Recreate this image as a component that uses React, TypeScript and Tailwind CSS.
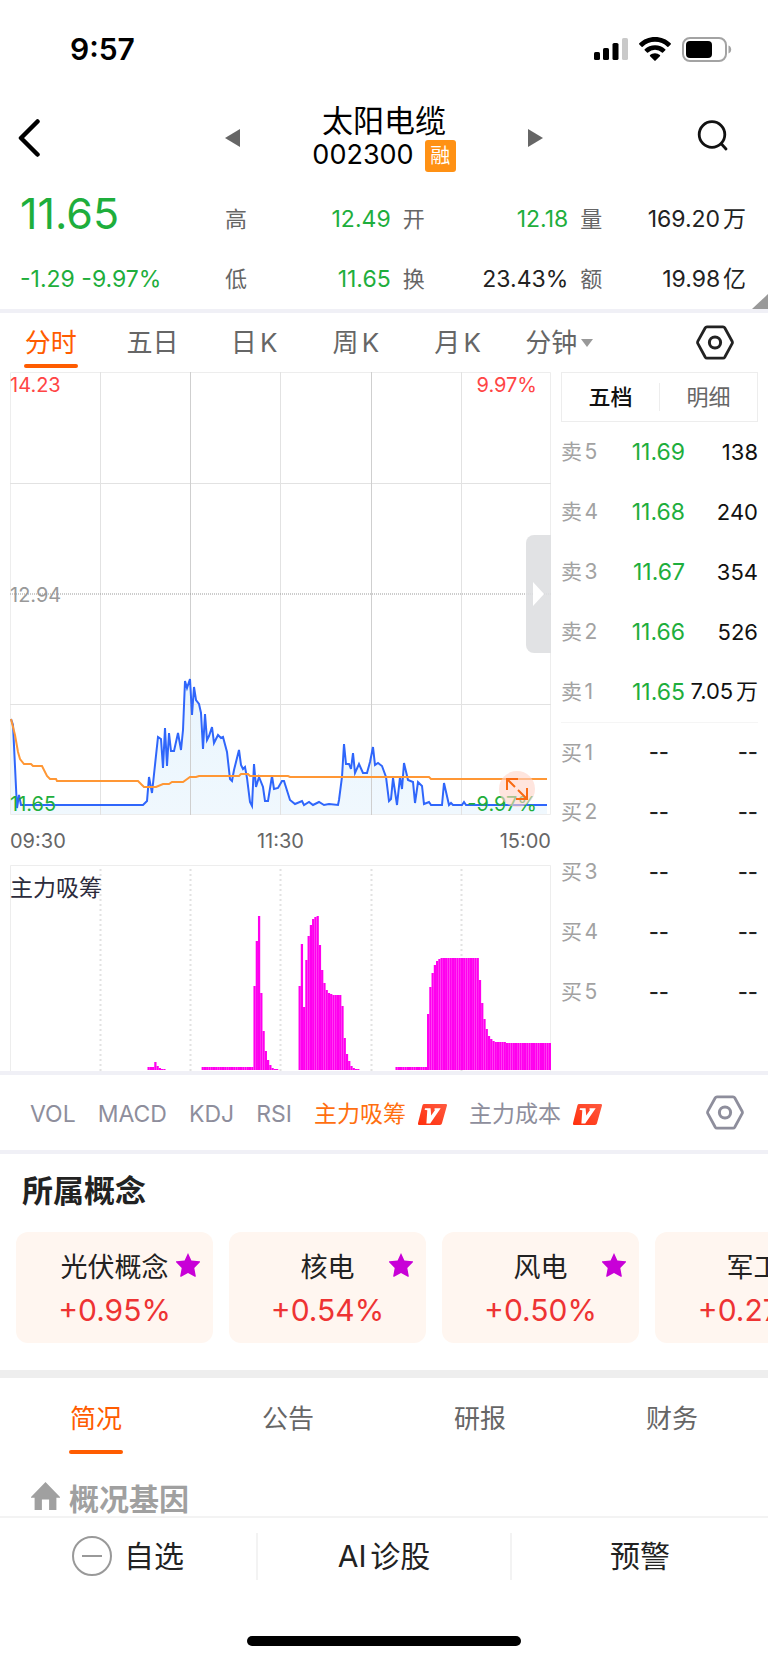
import { Fragment, useState, type ReactNode } from "react";

const periods = ["分时", "五日", "日K", "周K", "月K", "分钟"];

const quote = [
  [
    { label: "高", value: "12.49", down: true },
    { label: "开", value: "12.18", down: true },
    { label: "量", value: "169.20万", down: false },
  ],
  [
    { label: "低", value: "11.65", down: true },
    { label: "换", value: "23.43%", down: false },
    { label: "额", value: "19.98亿", down: false },
  ],
];

const asks = [
  ["卖5", "11.69", "138"],
  ["卖4", "11.68", "240"],
  ["卖3", "11.67", "354"],
  ["卖2", "11.66", "526"],
  ["卖1", "11.65", "7.05万"],
];

const bids = ["买1", "买2", "买3", "买4", "买5"];

const indicators = [
  { name: "VOL", vip: false },
  { name: "MACD", vip: false },
  { name: "KDJ", vip: false },
  { name: "RSI", vip: false },
  { name: "主力吸筹", vip: true },
  { name: "主力成本", vip: true },
];

const concepts = [
  { name: "光伏概念", change: "+0.95%" },
  { name: "核电", change: "+0.54%" },
  { name: "风电", change: "+0.50%" },
  { name: "军工", change: "+0.27%" },
];

const infoTabs = ["简况", "公告", "研报", "财务"];

const pricePoints =
  "1,347 3,353 7,436 9,423 11,433 133,433 137,429 139,405 142,421 148,365 151,367 153,396 155,356 157,394 159,361 161,379 164,379 168,361 171,378 173,358 175,309 177,316 180,307 182,343 184,315 186,328 189,332 191,341 193,377 195,342 197,368 199,364 202,355 204,371 208,363 211,366 213,365 217,380 220,407 222,409 224,398 229,378 231,393 233,397 235,395 237,406 240,430 242,434 244,392 246,415 249,405 253,415 255,429 258,429 262,404 264,417 268,416 272,409 274,409 280,428 285,432 292,429 294,433 299,430 303,433 309,430 314,433 319,432 328,433 329,428 332,405 334,372 336,392 339,392 341,397 343,381 345,401 349,392 353,401 357,401 360,390 363,375 365,393 368,391 372,394 376,405 379,429 381,427 383,406 387,433 390,405 392,417 394,391 398,408 403,410 405,431 408,410 412,414 414,432 419,430 421,433 432,433 434,411 439,433 441,431 443,433 452,433 454,430 456,433 537,433";

const averagePoints =
  "1,347 5,363 8,380 10,387 14,392 21,392 23,394 32,394 37,404 40,407 46,407 47,409 128,409 134,415 146,415 153,412 159,412 162,410 173,410 180,405 186,405 189,404 229,404 231,402 238,402 240,404 278,404 280,405 419,405 421,407 537,407";

// runs of one-minute bars: first minute, then the bar heights
const barRuns: [number, number[]][] = [
  [61, [3, 3, 3, 8, 4, 2, 1, 1]],
  [85, Array(23).fill(3)],
  [108, [84, 129, 154, 77, 39, 19, 10, 5, 2, 1, 1]],
  [128, [84, 126, 63, 110, 134, 145, 151, 153, 154, 125, 100, 87, 80, 77, 76, 75, 75, 75, 75, 64, 32, 16, 9, 4, 2, 1, 1]],
  [171, Array(14).fill(3)],
  [185, [56, 83, 97, 105, 109, 111, ...Array(17).fill(112), 90, 67, 51, 41, 34, 31, 29, 28, 28, 28, 28, 28, ...Array(20).fill(27)]],
];

const MINUTE = 541 / 240;

function HexIcon({ className }: { className: string }) {
  return (
    <svg viewBox="0 0 38 35" fill="none" stroke="currentColor" className={className} aria-hidden="true">
      <path d="M11 1.8h16a2 2 0 0 1 1.7 1l7.4 13.4a2.5 2.5 0 0 1 0 2.4l-7.4 13.6a2 2 0 0 1-1.7 1H11a2 2 0 0 1-1.7-1L1.9 18.6a2.5 2.5 0 0 1 0-2.4L9.3 2.8a2 2 0 0 1 1.7-1z" strokeWidth="2.8" />
      <circle cx="19" cy="17.5" r="5.6" strokeWidth="3" />
    </svg>
  );
}

function VipBadge() {
  return (
    <svg viewBox="0 0 29 21" className="h-[21px] w-[29px]" aria-hidden="true">
      <defs>
        <linearGradient id="vip" x1="0" y1="1" x2="1" y2="0">
          <stop offset="0" stopColor="#ff2f0c" />
          <stop offset="1" stopColor="#ff5a40" />
        </linearGradient>
      </defs>
      <path d="M6.2 0h21.3a1.4 1.4 0 0 1 1.4 1.8l-5 17.7a2 2 0 0 1-1.9 1.5H1.4A1.4 1.4 0 0 1 0 19.2L4.4 1.4A1.9 1.9 0 0 1 6.2 0z" fill="url(#vip)" />
      <path d="M7 4.200h5.600l.6 7.200 4-5.700-1-.3.5-1.200h6L12.200 19.400H8.400L9.300 6.200 6.600 5.800z" fill="#fff" />
    </svg>
  );
}

function Divider() {
  return <div className="h-1 bg-[#f0f0f6]" />;
}

function StatusBar() {
  return (
    <div className="flex h-[98px] items-center justify-between pl-[70px] pr-9">
      <span className="text-[30px] font-semibold text-black">9:57</span>
      <div className="flex items-center gap-[11px]">
        <svg viewBox="0 0 34 24" className="h-6 w-[34px]" aria-hidden="true">
          <rect x="0" y="15" width="6" height="8" rx="1.6" />
          <rect x="9" y="11" width="6" height="12" rx="1.6" />
          <rect x="18.500" y="6" width="6" height="17" rx="1.6" />
          <rect x="28" y="1" width="6" height="22" rx="1.6" fill="#c9c9c9" />
        </svg>
        <svg viewBox="0 0 32 24" className="h-6 w-8" aria-hidden="true">
          <path d="M16 0C9.800 0 4.200 2.400.3 6.300a.8.800 0 0 0 0 1.100l2.300 2.300a.8.800 0 0 0 1.100 0A17.700 17.700 0 0 1 16 4.800c4.800 0 9.100 1.900 12.300 4.900a.8.800 0 0 0 1.100 0l2.300-2.300a.8.800 0 0 0 0-1.100C27.800 2.400 22.200 0 16 0z" />
          <path d="M16 8.200c-4 0-7.600 1.500-10.300 4a.8.800 0 0 0 0 1.100L8 15.600a.8.800 0 0 0 1.100 0 10 10 0 0 1 13.800 0 .8.800 0 0 0 1.100 0l2.300-2.300a.8.800 0 0 0 0-1.100A15 15 0 0 0 16 8.200z" />
          <path d="M16 16.200c-1.900 0-3.600.7-4.900 1.900a.8.800 0 0 0 0 1.100l4.300 4.400a.8.800 0 0 0 1.200 0l4.300-4.400a.8.800 0 0 0 0-1.100 7.200 7.200 0 0 0-4.900-1.900z" />
        </svg>
        <svg viewBox="0 0 50 25" className="h-[25px] w-[50px]" aria-hidden="true">
          <rect x="1" y="1" width="43" height="23" rx="7" fill="none" stroke="#a3a3a3" strokeWidth="2" />
          <rect x="4" y="4" width="26" height="17" rx="4" />
          <path d="M46.500 8.500c1.700.6 2.700 2.200 2.700 4s-1 3.400-2.700 4z" fill="#a3a3a3" />
        </svg>
      </div>
    </div>
  );
}

function Header() {
  return (
    <header className="grid h-[91px] grid-cols-[1fr_auto_1fr] items-center pb-3 pl-[18px] pr-[18px]">
      <button type="button" aria-label="返回" className="justify-self-start">
        <svg viewBox="0 0 23 38" className="h-[38px] w-[23px]" fill="none" stroke="#000" strokeWidth="4.500" strokeLinecap="round" strokeLinejoin="round">
          <path d="M19.500 2.500 3 19l16.500 16.500" />
        </svg>
      </button>
      <div className="flex items-center gap-[72px]">
        <button type="button" aria-label="上一只">
          <svg viewBox="0 0 15 18" className="h-[18px] w-[15px]" fill="#666">
            <path d="M15 0v18L0 9z" />
          </svg>
        </button>
        <div className="text-center text-black">
          <h1 className="text-[31px] leading-9">太阳电缆</h1>
          <div className="flex h-[34px] items-center justify-center gap-[11px]">
            <span className="text-[27px]">002300</span>
            <span className="flex h-8 w-[31px] items-center justify-center rounded-[3px] bg-[#ff9114] text-[20px] text-white">融</span>
          </div>
        </div>
        <button type="button" aria-label="下一只">
          <svg viewBox="0 0 15 18" className="h-[18px] w-[15px]" fill="#666">
            <path d="M0 0v18l15-9z" />
          </svg>
        </button>
      </div>
      <button type="button" aria-label="搜索" className="mb-1 mr-[22px] justify-self-end">
        <svg viewBox="0 0 31 31" className="h-[31px] w-[31px]" fill="none" stroke="#111" strokeWidth="2.800" strokeLinecap="round">
          <circle cx="15" cy="14.500" r="12.800" />
          <path d="m24.500 24 4.500 5" />
        </svg>
      </button>
    </header>
  );
}

function QuoteCells({ row }: { row: (typeof quote)[number] }) {
  return row.map((cell) => (
    <dl key={cell.label} className="flex items-center justify-between">
      <dt className="text-[22px] text-[#666]">{cell.label}</dt>
      <dd className={`text-[23px] ${cell.down ? "text-[#1eae3c]" : "text-[#222]"}`}>{cell.value}</dd>
    </dl>
  ));
}

function Quote() {
  return (
    <section className="relative grid grid-cols-[193px_1fr_1fr_1fr] gap-x-3 pl-5 pr-[22px] text-[#1eae3c]">
      <div className="flex h-[60px] items-start text-[43px] leading-[48px]">11.65</div>
      <QuoteCells row={quote[0]} />
      <div className="flex h-[60px] items-center whitespace-nowrap text-[23px]">-1.29 -9.97%</div>
      <QuoteCells row={quote[1]} />
      <svg viewBox="0 0 16 15" className="absolute bottom-0 right-0 h-[15px] w-4" fill="#999" aria-hidden="true">
        <path d="M16 0v15H0z" />
      </svg>
    </section>
  );
}

function PriceChart() {
  return (
    <div className="relative">
      <svg viewBox="0 0 541 443" preserveAspectRatio="none" className="block h-[443px] w-full" fill="none">
        <defs>
          <linearGradient id="area" x1="0" y1="0" x2="0" y2="1">
            <stop offset="0" stopColor="#e9f5fd" />
            <stop offset="1" stopColor="#f0f8fe" />
          </linearGradient>
        </defs>
        <polygon points={`1,443 ${pricePoints} 537,443`} fill="url(#area)" />
        <path d="M.5.5h540v442H.5z" stroke="#ededed" />
        <path d="M90.500 0v443M270.500 0v443M451.500 0v443M0 111.500h541M0 332.500h541" stroke="#e2e2e2" />
        <path d="M180.500 0v443M361.500 0v443" stroke="#cfcfcf" />
        <path d="M0 222h541" stroke="#999" strokeDasharray="1 1" />
        <polyline points={pricePoints} stroke="#2f66fb" strokeWidth="2" />
        <polyline points={averagePoints} stroke="#ff9735" strokeWidth="2" />
      </svg>
      <span className="absolute left-0 top-0 text-[20px] leading-[26px] text-[#ff4545]">14.23</span>
      <span className="absolute right-[14px] top-0 text-[20px] leading-[26px] text-[#ff4545]">9.97%</span>
      <span className="absolute left-0 top-[210px] text-[20px] leading-[26px] text-[#999]">12.94</span>
      <span className="absolute bottom-0 left-0 text-[20px] leading-[22px] text-[#1eae3c]">11.65</span>
      <span className="absolute bottom-0 right-[14px] text-[20px] leading-[22px] text-[#1eae3c]">-9.97%</span>
      <button type="button" aria-label="收起盘口" className="absolute right-0 top-[163px] flex h-[118px] w-[25px] items-center justify-center rounded-l-lg bg-[#dedfe1]/90">
        <svg viewBox="0 0 11 24" className="h-6 w-[11px]" fill="#fff">
          <path d="M0 0v24l11-12z" />
        </svg>
      </button>
      <button type="button" aria-label="全屏" className="absolute bottom-2 right-4 flex h-9 w-9 items-center justify-center rounded-full bg-[#ffd3c8]/60">
        <svg viewBox="0 0 22 22" className="h-[22px] w-[22px]" fill="none" stroke="#f96a12" strokeWidth="2">
          <path d="M1 12V1h11M1.500 1.500 9 9M10 21h11V10M20.500 20.500 12 12" />
        </svg>
      </button>
    </div>
  );
}

function AccumulationChart() {
  return (
    <div className="relative">
      <svg viewBox="0 0 541 206" preserveAspectRatio="none" className="block h-[206px] w-full" fill="none">
        <path d="M.5 206V.5h540V206" stroke="#ededed" />
        <path d="M90.500 4v202M180.500 4v202M270.500 4v202M361.500 4v202M451.500 4v202" stroke="#e2e2e2" strokeWidth="2" strokeDasharray="2 3" />
        {barRuns.map(([start, heights]) => (
          <Fragment key={start}>
            {heights.map((h, i) => (
              <rect key={i} x={(start + i) * MINUTE} y={205 - h} width={MINUTE} height={h} fill="#f0e" />
            ))}
          </Fragment>
        ))}
      </svg>
      <span className="absolute left-0 top-2 text-[23px] leading-[30px] text-[#2c2c3c]">主力吸筹</span>
    </div>
  );
}

function OrderRow({ label, children }: { label: string; children: ReactNode }) {
  return (
    <tr className="h-[60px]">
      <th scope="row" className="w-[48px] text-left text-[21px] font-normal text-[#a2a2a2]">{label}</th>
      {children}
    </tr>
  );
}

function OrderBook() {
  const [tab, setTab] = useState("五档");

  return (
    <aside className="w-[197px] shrink-0">
      <div className="flex h-[50px] items-center border border-[#ededed]">
        {["五档", "明细"].map((name) => (
          <button
            key={name}
            type="button"
            onClick={() => setTab(name)}
            className={`h-7 flex-1 text-[22px] leading-7 not-first:border-l not-first:border-[#ededed] ${
              tab === name ? "font-medium text-[#111]" : "text-[#666]"
            }`}
          >
            {name}
          </button>
        ))}
      </div>
      <table className="w-full table-fixed border-collapse whitespace-nowrap text-right text-[22px]">
        <tbody>
          {asks.map(([label, price, volume]) => (
            <OrderRow key={label} label={label}>
              <td className="w-[76px] text-[23px] text-[#1eae3c]">{price}</td>
              <td className="text-[#111]">{volume}</td>
            </OrderRow>
          ))}
        </tbody>
        <tbody className="border-t border-[#f5f5f5] font-medium text-[#222]">
          {bids.map((label) => (
            <OrderRow key={label} label={label}>
              <td className="pr-4">--</td>
              <td>--</td>
            </OrderRow>
          ))}
        </tbody>
      </table>
    </aside>
  );
}

export default function App() {
  const [period, setPeriod] = useState("分时");
  const [indicator, setIndicator] = useState("主力吸筹");
  const [info, setInfo] = useState("简况");

  return (
    <div lang="zh-CN" className="w-full overflow-hidden bg-white font-['Inter','Noto_Sans_CJK_SC',sans-serif] [text-autospace:normal]">
      <StatusBar />
      <Header />
      <Quote />
      <Divider />

      <nav className="flex h-[59px] items-center pr-[34px]">
        <div className="grid flex-1 grid-cols-6">
          {periods.map((name) => (
            <button
              key={name}
              type="button"
              onClick={() => setPeriod(name)}
              className={`relative flex h-[59px] items-center justify-center text-[26px] ${
                period === name ? "text-[#ff5c00]" : "text-[#666]"
              }`}
            >
              {name}
              {name === "分钟" && (
                <svg viewBox="0 0 12 8" className="ml-1 h-2 w-3" fill="#999" aria-hidden="true">
                  <path d="M0 0h12L6 8z" />
                </svg>
              )}
              {period === name && <span className="absolute bottom-1 h-1 w-[54px] rounded-full bg-[#ff5c00]" />}
            </button>
          ))}
        </div>
        <button type="button" aria-label="图表设置" className="ml-[86px] text-[#222]">
          <HexIcon className="h-[35px] w-[38px]" />
        </button>
      </nav>

      <div className="flex gap-[10px] px-[10px]">
        <div className="min-w-0 flex-1">
          <PriceChart />
          <div className="grid h-[52px] grid-cols-3 items-center text-[20px] text-[#666]">
            <span>09:30</span>
            <span className="text-center">11:30</span>
            <span className="text-right">15:00</span>
          </div>
          <div className="-mt-[2px]">
            <AccumulationChart />
          </div>
        </div>
        <OrderBook />
      </div>
      <Divider />

      <div className="flex h-[75px] items-center justify-between pl-[30px] pr-6">
        <div className="flex items-center gap-[22px] pt-1">
          {indicators.map(({ name, vip }) => (
            <button
              key={name}
              type="button"
              onClick={() => setIndicator(name)}
              className={`flex items-center gap-3 text-[23px] ${
                indicator === name ? "text-[#ff6f10]" : "text-[#8e8e9c]"
              }`}
            >
              {name}
              {vip && <VipBadge />}
            </button>
          ))}
        </div>
        <button type="button" aria-label="指标设置" className="text-[#8e8e9c]">
          <HexIcon className="h-[35px] w-[38px]" />
        </button>
      </div>
      <Divider />

      <section className="pb-[27px] pt-[14px]">
        <h2 className="pl-[22px] text-[31px] font-semibold leading-[46px] text-[#222]">所属概念</h2>
        <div className="mt-[18px] flex gap-4 overflow-hidden pl-4">
          {concepts.map(({ name, change }) => (
            <a key={name} href="#" className="relative h-[111px] w-[197px] shrink-0 rounded-xl bg-[#fff6f0] pt-[18px] text-center">
              <span className="block text-[27px] leading-9 text-[#222]">{name}</span>
              <span className="block text-[30px] leading-[48px] text-[#ee3333]">{change}</span>
              <svg viewBox="0 0 24 24" className="absolute right-[13px] top-[21px] h-6 w-6" fill="#c800d7" aria-hidden="true">
                <path d="M12 0l3.400 7.500 8.100.7c.6 0 .8.700.4 1.100l-5.600 5.800 1.500 7.900c.1.600-.5 1-1 .7L12 20l-6.800 3.700c-.5.300-1.100-.1-1-.7l1.500-7.900L.1 9.300c-.4-.4-.2-1.100.4-1.100l8.100-.7z" />
              </svg>
            </a>
          ))}
        </div>
      </section>
      <div className="h-2 bg-[#eee]" />

      <nav className="grid h-20 grid-cols-4">
        {infoTabs.map((name) => (
          <button
            key={name}
            type="button"
            onClick={() => setInfo(name)}
            className={`relative flex items-center justify-center text-[26px] ${
              info === name ? "text-[#ff5c00]" : "text-[#666]"
            }`}
          >
            {name}
            {info === name && <span className="absolute bottom-1 h-1 w-[54px] rounded-full bg-[#ff5c00]" />}
          </button>
        ))}
      </nav>

      <section className="flex items-start gap-[9px] pl-[31px] pt-6 text-[#a0a0a0]">
        <svg viewBox="0 0 29 28" className="h-7 w-[29px]" fill="currentColor" aria-hidden="true">
          <path d="M14.500 0 29 15v.8h-3.600V28h-7.300V17.500h-7.200V28H3.600V15.800H0V15z" />
        </svg>
        <h2 className="text-[30px] font-bold leading-[34px]">概况基因</h2>
      </section>

      <footer className="border-t-2 border-[#f3f3f3] bg-white text-[30px] text-[#222]">
        <div className="grid h-[76px] grid-cols-3 items-center">
          <button type="button" className="flex h-[47px] items-center justify-center gap-3">
            <svg viewBox="0 0 40 40" className="h-10 w-10" fill="none" stroke="#999" strokeWidth="2" aria-hidden="true">
              <circle cx="20" cy="20" r="19" />
              <path d="M10 20h20" />
            </svg>
            自选
          </button>
          <button type="button" className="h-[47px] border-x-2 border-[#f3f3f3]">AI诊股</button>
          <button type="button" className="h-[47px]">预警</button>
        </div>
        <div className="pb-[17px] pt-[42px]">
          <div className="mx-auto h-[10px] w-[274px] rounded-full bg-black" />
        </div>
      </footer>
    </div>
  );
}
